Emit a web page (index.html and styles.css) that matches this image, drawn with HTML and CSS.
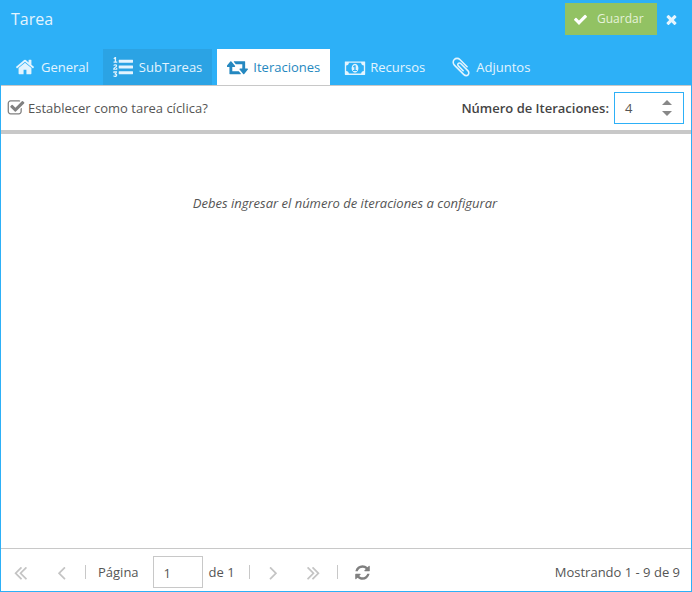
FILE: index.html
```html
<!DOCTYPE html>
<html lang="es">
<head>
    <meta charset="UTF-8">
    <title>Tarea</title>
    <link rel="stylesheet" href="styles.css">
</head>
<body>
    <div class="window">
        <div class="header">
            <div class="title-row">
                <span class="title">Tarea</span>
                <div class="actions">
                    <button class="save-btn">
                        <svg class="icon-check" viewBox="0 0 1792 1792"><path d="M1671 566q0 40-28 68l-724 724-136 136q-28 28-68 28t-68-28l-136-136-362-362q-28-28-28-68t28-68l136-136q28-28 68-28t68 28l294 295 656-657q28-28 68-28t68 28l136 136q28 28 28 68z"/></svg>
                        Guardar
                    </button>
                    <svg class="icon-close" viewBox="0 0 1792 1792"><path d="M1490 1322q0 40-28 68l-136 136q-28 28-68 28t-68-28l-294-294-294 294q-28 28-68 28t-68-28l-136-136q-28-28-28-68t28-68l294-294-294-294q-28-28-28-68t28-68l136-136q28-28 68-28t68 28l294 294 294-294q28-28 68-28t68 28l136 136q28 28 28 68t-28 68l-294 294 294 294q28 28 28 68z"/></svg>
                </div>
            </div>
            <div class="tabs">
                <a class="tab">
                    <svg class="icon-home" viewBox="0 0 1792 1792"><path d="M1472 992v480q0 26-19 45t-45 19h-384v-384h-256v384h-384q-26 0-45-19t-19-45v-480q0-1 .5-3t.5-3l575-474 575 474q1 2 1 6zm223-69l-62 74q-8 9-21 11h-3q-13 0-21-7l-692-577-692 577q-12 8-24 7-13-2-21-11l-62-74q-8-10-7-23.5t11-21.5l719-599q32-26 76-26t76 26l244 204v-195q0-14 9-23t23-9h192q14 0 23 9t9 23v408l219 182q10 8 11 21.5t-7 23.5z"/></svg>
                    General
                </a>
                <a class="tab tab-hover">
                    <svg class="icon-list" viewBox="0 0 1792 1792"><path d="M381 1620q0 80-54.5 126t-135.5 46q-106 0-172-66l57-88q49 45 106 45 29 0 50.5-14.5t21.5-42.5q0-64-105-56l-26-56q8-10 32.5-43.5t42.5-54 37-38.5v-1q-16 0-48.5 1t-48.5 1v53h-106v-152h333v88l-95 115q51 12 81 49t30 88zm2-627v159h-362q-6-36-6-54 0-51 23.5-93t56.5-68 66-47.5 56.5-43.5 23.5-45q0-25-14.5-38.5t-39.5-13.5q-46 0-81 58l-85-59q24-51 71.5-79.5t105.5-28.5q73 0 123 41.5t50 112.5q0 50-34 91.5t-75 64.5-75.5 50.5-35.5 52.5h127v-60h105zm1409 319v192q0 13-9.5 22.5t-22.5 9.5h-1216q-13 0-22.5-9.5t-9.5-22.5v-192q0-14 9-23t23-9h1216q13 0 22.5 9.5t9.5 22.5zm-1408-899v99h-335v-99h107q0-41 .5-121.5t.5-121.5v-12h-2q-8 17-50 54l-71-76 136-127h106v404h108zm1408 387v192q0 13-9.5 22.5t-22.5 9.5h-1216q-13 0-22.5-9.5t-9.5-22.5v-192q0-14 9-23t23-9h1216q13 0 22.5 9.5t9.5 22.5zm0-512v192q0 13-9.5 22.5t-22.5 9.5h-1216q-13 0-22.5-9.5t-9.5-22.5v-192q0-13 9.5-22.5t22.5-9.5h1216q13 0 22.5 9.5t9.5 22.5z"/></svg>
                    SubTareas
                </a>
                <a class="tab tab-active">
                    <svg class="icon-retweet" viewBox="0 0 1920 1792"><path d="M1216 1504q0 13-9.5 22.5t-22.5 9.5h-960q-8 0-13.5-2t-9-7-5.5-8-3-11.5-1-11.5v-600h-192q-26 0-45-19t-19-45q0-24 15-41l320-384q19-22 49-22t49 22l320 384q15 17 15 41 0 26-19 45t-45 19h-192v384h576q16 0 25 11l160 192q7 11 7 21zm640-416q0 24-15 41l-320 384q-20 23-49 23t-49-23l-320-384q-15-17-15-41 0-26 19-45t45-19h192v-384h-576q-16 0-25-12l-160-192q-7-9-7-20 0-13 9.5-22.5t22.5-9.5h960q8 0 13.5 2t9 7 5.5 8 3 11.5 1 11.5v600h192q26 0 45 19t19 45z"/></svg>
                    Iteraciones
                </a>
                <a class="tab">
                    <svg class="icon-money" viewBox="0 0 2048 1792"><path d="M832 1216h384v-96h-128v-448h-114l-148 137 77 80q42-37 55-57h2v288h-128v96zm512-256q0 70-21 142t-59.5 134-101.5 101-138 39-138-39-101.5-101-59.5-134-21-142 21-142 59.5-134 101.5-101 138-39 138 39 101.5 101 59.5 134 21 142zm512 256v-512q-106 0-181-75t-75-181h-1152q0 106-75 181t-181 75v512q106 0 181 75t75 181h1152q0-106 75-181t181-75zm128-832v1152q0 26-19 45t-45 19h-1792q-26 0-45-19t-19-45v-1152q0-26 19-45t45-19h1792q26 0 45 19t19 45z"/></svg>
                    Recursos
                </a>
                <a class="tab">
                    <svg class="icon-clip" viewBox="0 0 1792 1792"><path d="M1596 1385q0 117-79 196t-196 79q-135 0-235-100l-777-776q-113-115-113-271 0-159 110-270t269-111q158 0 273 113l605 606q10 10 10 22 0 16-30.5 46.5t-46.5 30.5q-13 0-23-10l-606-607q-79-77-181-77-106 0-179 75t-73 181q0 105 76 181l776 777q63 63 145 63 64 0 106-42t42-106q0-82-63-145l-581-581q-26-24-60-24-29 0-48 19t-19 48q0 32 25 59l410 410q10 10 10 22 0 16-31 47t-47 31q-12 0-22-10l-410-410q-63-61-63-149 0-82 57-139t139-57q88 0 149 63l581 581q100 98 100 235z"/></svg>
                    Adjuntos
                </a>
            </div>
        </div>

        <div class="toolbar">
            <label class="cyclic">
                <svg class="icon-checkbox" viewBox="0 0 1792 1792"><path d="M1472 930v318q0 119-84.5 203.5t-203.5 84.5h-832q-119 0-203.5-84.5t-84.5-203.5v-832q0-119 84.5-203.5t203.5-84.5h832q63 0 117 25 15 7 18 23 3 17-9 29l-49 49q-10 10-23 10-3 0-9-2-23-6-45-6h-832q-66 0-113 47t-47 113v832q0 66 47 113t113 47h832q66 0 113-47t47-113v-254q0-13 9-22l64-64q10-10 23-10 6 0 12 3 20 8 20 29zm231-489l-814 814q-24 24-57 24t-57-24l-430-430q-24-24-24-57t24-57l110-110q24-24 57-24t57 24l263 263 647-647q24-24 57-24t57 24l110 110q24 24 24 57t-24 57z"/></svg>
                Establecer como tarea cíclica?
            </label>
            <div class="iterations">
                <span class="iterations-label">Número de Iteraciones:</span>
                <div class="spinner">
                    <span>4</span>
                    <div class="spinner-arrows">
                        <i class="arrow-up"></i>
                        <i class="arrow-down"></i>
                    </div>
                </div>
            </div>
        </div>

        <div class="content">
            <p class="empty-msg">Debes ingresar el número de iteraciones a configurar</p>
        </div>

        <div class="pager">
            <svg class="pg-icon pg-first" viewBox="0 0 1792 1792"><path d="M1011 1376q0 13-10 23l-50 50q-10 10-23 10t-23-10l-466-466q-10-10-10-23t10-23l466-466q10-10 23-10t23 10l50 50q10 10 10 23t-10 23l-393 393 393 393q10 10 10 23zm384 0q0 13-10 23l-50 50q-10 10-23 10t-23-10l-466-466q-10-10-10-23t10-23l466-466q10-10 23-10t23 10l50 50q10 10 10 23t-10 23l-393 393 393 393q10 10 10 23z"/></svg>
            <svg class="pg-icon pg-prev" viewBox="0 0 1792 1792"><path d="M1203 544q0 13-10 23l-393 393 393 393q10 10 10 23t-10 23l-50 50q-10 10-23 10t-23-10l-466-466q-10-10-10-23t10-23l466-466q10-10 23-10t23 10l50 50q10 10 10 23z"/></svg>
            <span class="pg-sep sep-a"></span>
            <span class="pg-text">Página</span>
            <div class="page-box">1</div>
            <span class="pg-text">de 1</span>
            <span class="pg-sep sep-b"></span>
            <svg class="pg-icon pg-next" viewBox="0 0 1792 1792"><path d="M1171 960q0 13-10 23l-466 466q-10 10-23 10t-23-10l-50-50q-10-10-10-23t10-23l393-393-393-393q-10-10-10-23t10-23l50-50q10-10 23-10t23 10l466 466q10 10 10 23z"/></svg>
            <svg class="pg-icon pg-last" viewBox="0 0 1792 1792"><path d="M979 960q0 13-10 23l-466 466q-10 10-23 10t-23-10l-50-50q-10-10-10-23t10-23l393-393-393-393q-10-10-10-23t10-23l50-50q10-10 23-10t23 10l466 466q10 10 10 23zm384 0q0 13-10 23l-466 466q-10 10-23 10t-23-10l-50-50q-10-10-10-23t10-23l393-393-393-393q-10-10-10-23t10-23l50-50q10-10 23-10t23 10l466 466q10 10 10 23z"/></svg>
            <span class="pg-sep sep-c"></span>
            <svg class="pg-refresh" viewBox="0 0 1792 1792"><path d="M1639 1056q0 5-1 7-64 268-268 434.5t-478 166.5q-146 0-282.5-55t-243.5-157l-129 129q-19 19-45 19t-45-19-19-45v-448q0-26 19-45t45-19h448q26 0 45 19t19 45-19 45l-137 137q71 66 161 102t187 36q134 0 250-65t186-179q11-17 53-117 8-23 30-23h192q13 0 22.5 9.5t9.5 22.5zm25-800v448q0 26-19 45t-45 19h-448q-26 0-45-19t-19-45 19-45l138-138q-148-137-349-137-134 0-250 65t-186 179q-11 17-53 117-8 23-30 23h-199q-13 0-22.5-9.5t-9.5-22.5v-7q65-268 270-434.5t480-166.5q146 0 284 55.5t245 156.5l130-129q19-19 45-19t45 19 19 45z"/></svg>
            <span class="pg-info">Mostrando 1 - 9 de 9</span>
        </div>
    </div>
</body>
</html>
```

FILE: styles.css
```css
* {
    box-sizing: border-box;
}
body {
    font-family: "Open Sans", sans-serif;
    margin: 0;
    background-color: white;
}
svg {
    display: block;
    fill: currentColor;
    flex: none;
}
.window {
    height: 592px;
    display: flex;
    flex-direction: column;
    border: 1px solid #2db0f7;
    border-top: none;
    color: #555;
}
.header {
    background-color: #2db0f7;
    margin: 0 -1px;
    height: 85px;
    flex: none;
    display: flex;
    flex-direction: column;
    color: #e3f4fe;
}
.title-row {
    height: 49px;
    display: flex;
    justify-content: space-between;
    padding: 3px 13px 0 11px;
}
.title {
    font-size: 16px;
    line-height: 32px;
}
.actions {
    display: flex;
    align-items: flex-start;
    gap: 7px;
}
.save-btn {
    width: 92px;
    height: 32px;
    background-color: #92c263;
    border: none;
    color: #e6f2da;
    font-family: inherit;
    font-size: 12px;
    display: flex;
    align-items: center;
    gap: 9px;
    padding: 0 0 2px 8px;
}
.icon-check {
    width: 15px;
    height: 15px;
    color: white;
    margin-top: 2px;
}
.icon-close {
    width: 15px;
    height: 15px;
    color: #e6f5fe;
    margin-top: 9px;
}
.tabs {
    display: flex;
    gap: 4px;
    padding-left: 6px;
}
.tab {
    height: 36px;
    display: flex;
    align-items: center;
    padding: 0 10px;
    font-size: 13px;
    gap: 6px;
}
.tab-hover {
    background-color: #2ba3e4;
}
.tab-active {
    background-color: white;
    color: #2588c0;
    margin-left: 1px;
}
.icon-home {
    width: 20px;
    height: 20px;
    margin-left: -1px;
}
.icon-list {
    width: 20px;
    height: 20px;
}
.icon-retweet {
    width: 22px;
    height: 20px;
    margin-right: -2px;
}
.icon-money {
    width: 22px;
    height: 19px;
    margin-right: -2px;
}
.icon-clip {
    width: 22px;
    height: 22px;
    margin: 0 -2px 0 1px;
}
.toolbar {
    height: 49px;
    flex: none;
    display: flex;
    justify-content: space-between;
    align-items: center;
    border-top: 1px solid #c8c8c8;
    border-bottom: 4px solid #c8c8c8;
    padding: 0 7px 0 6px;
    font-size: 13px;
}
.cyclic {
    display: flex;
    align-items: center;
    gap: 3px;
}
.icon-checkbox {
    width: 18px;
    height: 18px;
    color: #808080;
}
.iterations {
    display: flex;
    align-items: center;
    gap: 5px;
}
.iterations-label {
    font-weight: 600;
    color: #444;
}
.spinner {
    width: 70px;
    height: 32px;
    border: 1px solid #2db0f7;
    display: flex;
    justify-content: space-between;
    align-items: center;
    padding: 0 11px 0 10px;
}
.spinner-arrows {
    display: flex;
    flex-direction: column;
    gap: 6px;
}
.arrow-up, .arrow-down {
    display: block;
    width: 0;
    height: 0;
    border-left: 5px solid transparent;
    border-right: 5px solid transparent;
}
.arrow-up {
    border-bottom: 5px solid #888;
}
.arrow-down {
    border-top: 5px solid #888;
}
.content {
    flex: 1;
    background-color: white;
}
.empty-msg {
    margin: 60px 0 0;
    padding-right: 2px;
    text-align: center;
    font-size: 13px;
    font-style: italic;
}
.pager {
    height: 43px;
    flex: none;
    border-top: 1px solid #c8c8c8;
    padding-top: 4px;
    display: flex;
    align-items: center;
    font-size: 13px;
}
.pg-icon {
    width: 23px;
    height: 23px;
    color: #c4c4c4;
}
.pg-first {
    margin-left: 8px;
}
.pg-prev {
    margin-left: 18px;
}
.pg-sep {
    width: 1px;
    height: 14px;
    background-color: #c8c8c8;
}
.sep-a {
    margin: 0 12px 0 12px;
}
.page-box {
    width: 50px;
    height: 32px;
    border: 1px solid #c8c8c8;
    margin: 0 6px 0 14px;
    padding: 7px 0 0 10px;
}
.sep-b {
    margin: 0 12px 0 14px;
}
.pg-last {
    margin-left: 17px;
}
.sep-c {
    margin: 0 16px 0 12px;
}
.pg-refresh {
    width: 17px;
    height: 17px;
    color: #808080;
}
.pg-info {
    margin-left: auto;
    margin-right: 11px;
}
```
